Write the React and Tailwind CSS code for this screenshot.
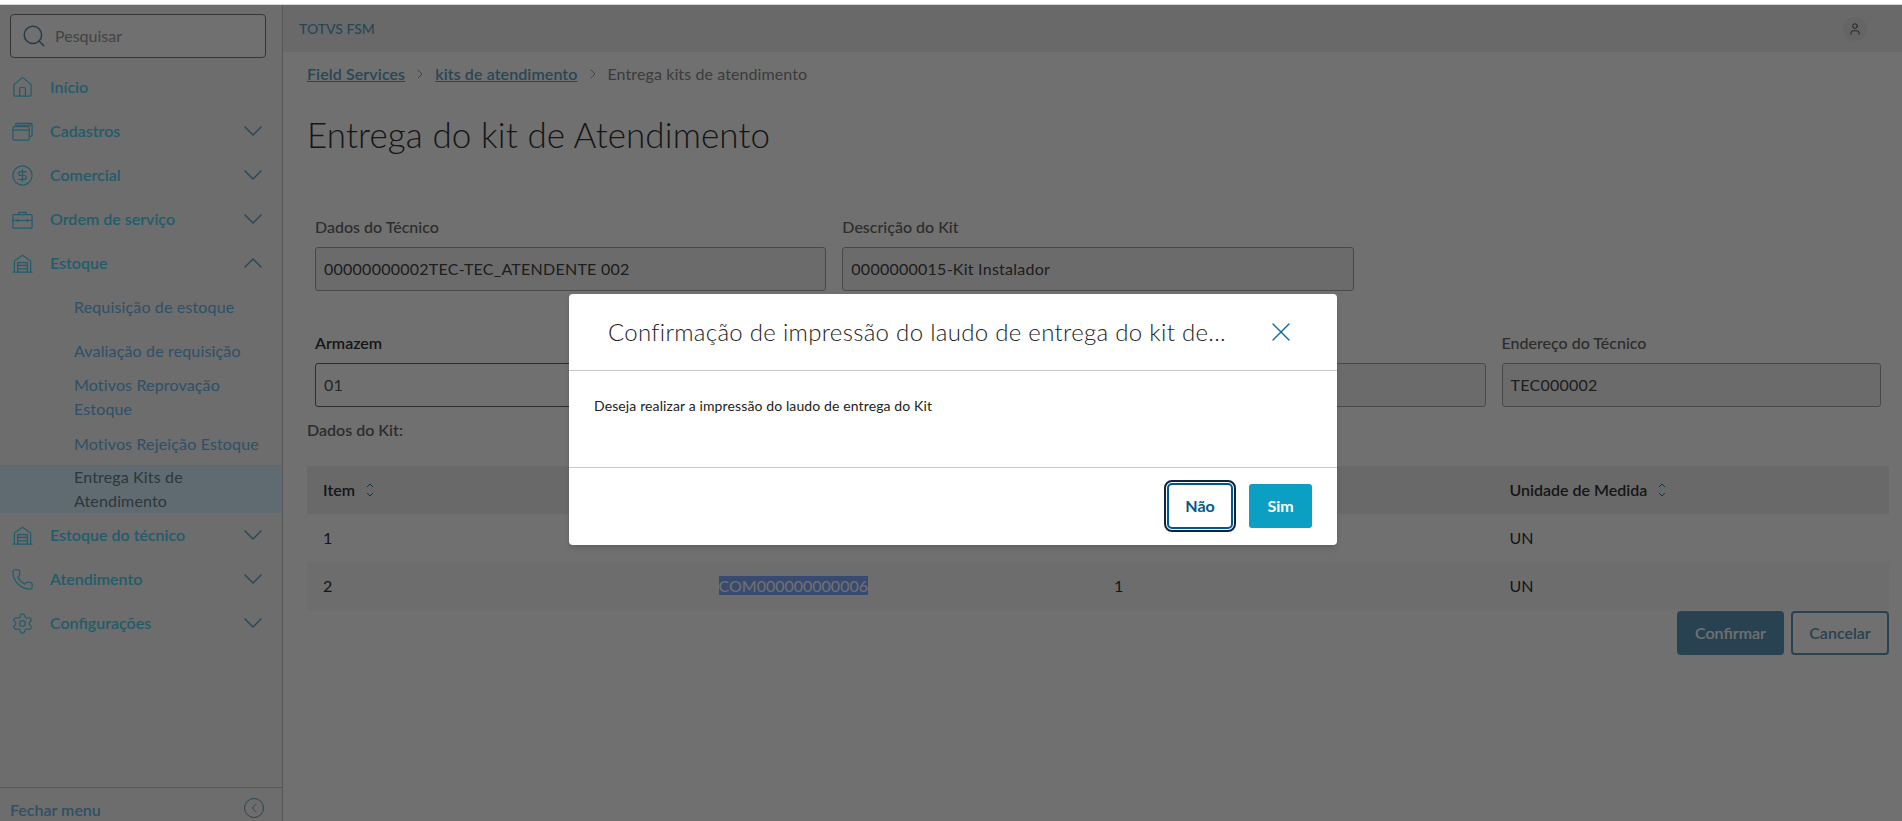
import {
  ChevronDown,
  ChevronLeft,
  ChevronRight,
  ChevronUp,
  CircleDollarSign,
  Home,
  Phone,
  Search,
  Settings,
  User,
  X,
} from "lucide-react"

const CardsIcon = (props) => (
  <svg viewBox="0 0 24 24" fill="none" stroke="currentColor" strokeWidth="1.3" {...props}>
    <rect x="2" y="7" width="17" height="14" rx="1.5" />
    <path d="M2 10.5h17" />
    <path d="M5 7V4.6C5 4 5.5 3.5 6.1 3.5H21c.6 0 1 .5 1 1V16c0 .7-.5 1.2-1.2 1.2H19" />
    <path d="M5 5.5h17" />
  </svg>
)

const ToolboxIcon = (props) => (
  <svg viewBox="0 0 24 24" fill="none" stroke="currentColor" strokeWidth="1.3" {...props}>
    <rect x="2" y="7" width="20" height="14" rx="1" />
    <path d="M8 7V4.5h8V7" />
    <path d="M2 13h20" />
    <path d="M7 11.5v3M17 11.5v3" />
  </svg>
)

const GarageIcon = (props) => (
  <svg viewBox="0 0 24 24" fill="none" stroke="currentColor" strokeWidth="1.3" {...props}>
    <path d="M1.5 21h21" />
    <path d="M3.5 21V9.5L12 3.5l8.5 6V21" />
    <path d="M7 21V11h10v10" />
    <path d="M7 14h10M7 17.5h10" />
  </svg>
)

const SortIcon = () => (
  <svg viewBox="0 0 8 16" className="w-2 h-4" fill="none" stroke="#0c7fa8" strokeWidth="1">
    <path d="M1 5l3-3 3 3M1 11l3 3 3-3" />
  </svg>
)

const menuTop = [
  { label: "Início", icon: Home },
  { label: "Cadastros", icon: CardsIcon, arrow: true },
  { label: "Comercial", icon: CircleDollarSign, arrow: true },
  { label: "Ordem de serviço", icon: ToolboxIcon, arrow: true },
]

const menuBottom = [
  { label: "Estoque do técnico", icon: GarageIcon, arrow: true },
  { label: "Atendimento", icon: Phone, arrow: true },
  { label: "Configurações", icon: Settings, arrow: true },
]

const subItems = [
  { label: "Requisição de estoque", cls: "h-11" },
  { label: "Avaliação de requisição", cls: "h-11" },
  { label: "Motivos Reprovação Estoque", cls: "h-[58px] -mt-[5px]" },
  { label: "Motivos Rejeição Estoque", cls: "h-[34px] mt-[1px]" },
]

const MenuItem = ({ label, icon: Icon, arrow, open }) => (
  <div className="h-11 flex items-center pl-[11px] pr-[13px] text-[#4fd2f2]">
    <Icon className="w-[23px] h-[23px] shrink-0" strokeWidth={1.3} />
    <span className="ml-[16px] flex-1 text-base font-semibold">{label}</span>
    {arrow &&
      (open ? (
        <ChevronUp className="w-8 h-8 text-[#5f9fc4]" strokeWidth={1} />
      ) : (
        <ChevronDown className="w-8 h-8 text-[#5f9fc4]" strokeWidth={1} />
      ))}
  </div>
)

const Sidebar = () => (
  <aside className="w-[283px] shrink-0 flex flex-col bg-[#f8f8f8] border-r border-[#c4c4c4]">
    <div className="pl-[10px] pr-[16px] pt-[9px] pb-[7px]">
      <div className="h-[44px] flex items-center border border-[#777] rounded-[4px] bg-white pl-[10px]">
        <Search className="w-[26px] h-[26px] text-[#5a88a0]" strokeWidth={1.4} />
        <span className="ml-[8px] text-base text-[#999]">Pesquisar</span>
      </div>
    </div>
    {menuTop.map((m) => (
      <MenuItem key={m.label} {...m} />
    ))}
    <MenuItem label="Estoque" icon={GarageIcon} arrow open />
    {subItems.map((s) => (
      <div key={s.label} className={`${s.cls} flex items-center pl-[74px] pr-4 text-base leading-6 tracking-[0.15px] text-[#6bb6ec]`}>
        {s.label}
      </div>
    ))}
    <div className="h-[48px] flex items-center pl-[74px] text-base leading-6 tracking-[0.15px] text-[#667d88] bg-[#d8f3ff] mt-[4px]">
      <span>
        Entrega Kits de
        <br />
        Atendimento
      </span>
    </div>
    {menuBottom.map((m) => (
      <MenuItem key={m.label} {...m} />
    ))}
    <div className="mt-auto h-[34px] flex items-start justify-between border-t border-[#c4c4c4] pl-[10px] pr-[18px] pt-[10px] text-base font-semibold text-[#6bb6ec]">
      <span>Fechar menu</span>
      <span className="w-5 h-5 rounded-full border border-[#5f9fc4] flex items-center justify-center text-[#5f9fc4]">
        <ChevronLeft className="w-3.5 h-3.5" strokeWidth={1.6} />
      </span>
    </div>
  </aside>
)

const Field = ({ label, value, span, active }) => (
  <div className={span}>
    <label className={`block h-[24px] mb-[8px] text-base ${active ? "font-semibold text-[#333]" : "font-medium text-[#666]"}`}>
      {label}
    </label>
    <div
      className={`h-[44px] flex items-center px-[8px] rounded-[3px] border text-base tracking-[0.25px] ${
        active ? "border-[#666] bg-white text-[#555]" : "border-[#a6a6a6] bg-[#f4f4f4] text-[#444]"
      }`}
    >
      {value}
    </div>
  </div>
)

const Table = () => (
  <div className="mt-[24px] text-base text-[#333]">
    <div className="grid grid-cols-4 h-[48px] items-center bg-[#eeeeee] font-semibold">
      <div className="pl-4 flex items-center gap-[11px]">
        Item <SortIcon />
      </div>
      <div />
      <div />
      <div className="pl-4 flex items-center gap-[11px]">
        Unidade de Medida <SortIcon />
      </div>
    </div>
    <div className="grid grid-cols-4 h-[48px] items-center font-normal">
      <div className="pl-4">1</div>
      <div />
      <div />
      <div className="pl-4">UN</div>
    </div>
    <div className="grid grid-cols-4 h-[48px] items-center bg-[#f8f8f8] font-normal">
      <div className="pl-4">2</div>
      <div className="pl-4">
        <span className="bg-[#7fa8ff] text-white">COM000000000006</span>
      </div>
      <div className="pl-4">1</div>
      <div className="pl-4">UN</div>
    </div>
  </div>
)

const Modal = () => (
  <div className="absolute left-[569px] top-[289px] w-[768px] h-[251px] bg-white rounded-[4px] shadow-md flex flex-col">
    <div className="h-[77px] flex items-center border-b border-[#c8c8c8] pl-[39px]">
      <h2 className="w-[620px] whitespace-nowrap text-2xl font-light tracking-[0.3px] text-[#222]">
        Confirmação de impressão do laudo de entrega do kit de...
      </h2>
      <X className="w-8 h-8 ml-[37px] text-[#0c6a9a]" strokeWidth={1} />
    </div>
    <div className="h-[97px] border-b border-[#c8c8c8] pl-[25px] pt-[25px] text-sm leading-5 tracking-[0.12px] text-[#222]">
      Deseja realizar a impressão do laudo de entrega do Kit
    </div>
    <div className="flex-1 flex items-center justify-end gap-[16px] pr-[25px] pb-[2px]">
      <button className="w-[66px] h-[46px] rounded-[5px] border-2 border-[#00588a] outline-2 outline-offset-1 outline-[#0a2640] text-base font-bold text-[#00588a]">
        Não
      </button>
      <button className="w-[63px] h-[44px] rounded-[3px] bg-[#0c9fc4] text-base font-bold text-white">
        Sim
      </button>
    </div>
  </div>
)

export default function App() {
  return (
    <div className="h-screen flex flex-col overflow-hidden bg-white font-['Lato','Open_Sans',sans-serif]">
      <div className="h-[5px] shrink-0 bg-white border-b border-[#d8d8d8]" />
      <div className="flex-1 relative flex min-h-0">
        <Sidebar />
        <main className="flex-1 min-w-0 flex flex-col">
          <header className="h-[47px] shrink-0 flex items-center justify-between bg-[#efefef] pl-[16px] pr-[35px] text-sm text-[#5f9fc4] font-medium">
            <span>TOTVS FSM</span>
            <span className="w-6 h-6 rounded-full bg-[#e6e6e6] flex items-center justify-center">
              <User className="w-3.5 h-3.5 text-[#333]" strokeWidth={1.4} />
            </span>
          </header>
          <div className="flex-1 pl-6 pr-[13px] pt-[10px]">
            <nav className="h-6 flex items-center text-base tracking-[0.1px]">
              <a className="font-semibold underline text-[#5f9fc4]">Field Services</a>
              <ChevronRight className="w-4 h-4 mx-[7px] text-[#888]" strokeWidth={1.3} />
              <a className="font-semibold underline text-[#5f9fc4]">kits de atendimento</a>
              <ChevronRight className="w-4 h-4 mx-[7px] text-[#888]" strokeWidth={1.3} />
              <span className="text-[#888]">Entrega kits de atendimento</span>
            </nav>
            <h1 className="mt-[24px] mb-[1px] h-[48px] text-[35px] leading-[48px] font-light tracking-[0.1px] text-[#333]">
              Entrega do kit de Atendimento
            </h1>
            <div className="mt-[57px] grid grid-cols-12 gap-x-4 px-2">
              <Field span="col-span-4" label="Dados do Técnico" value="00000000002TEC-TEC_ATENDENTE 002" />
              <Field span="col-span-4" label="Descrição do Kit" value="0000000015-Kit Instalador" />
              <div className="col-span-4" />
            </div>
            <div className="mt-[40px] grid grid-cols-12 gap-x-4 px-2">
              <Field span="col-span-3" label="Armazem" value="01" active />
              <Field span="col-span-3" label="" value="" />
              <Field span="col-span-3" label="" value="" />
              <Field span="col-span-3" label="Endereço do Técnico" value="TEC000002" />
            </div>
            <p className="mt-[11px] h-6 text-base font-semibold text-[#666]">Dados do Kit:</p>
            <Table />
            <div className="mt-[1px] flex justify-end gap-[7px]">
              <button className="w-[107px] h-[44px] rounded-[4px] bg-[#5b97bb] text-base font-semibold text-white">
                Confirmar
              </button>
              <button className="w-[98px] h-[44px] rounded-[4px] border-2 border-[#5b97bb] text-base font-semibold text-[#5b97bb]">
                Cancelar
              </button>
            </div>
          </div>
        </main>
        <div className="absolute inset-0 bg-black/[.56]" />
        <Modal />
      </div>
    </div>
  )
}
